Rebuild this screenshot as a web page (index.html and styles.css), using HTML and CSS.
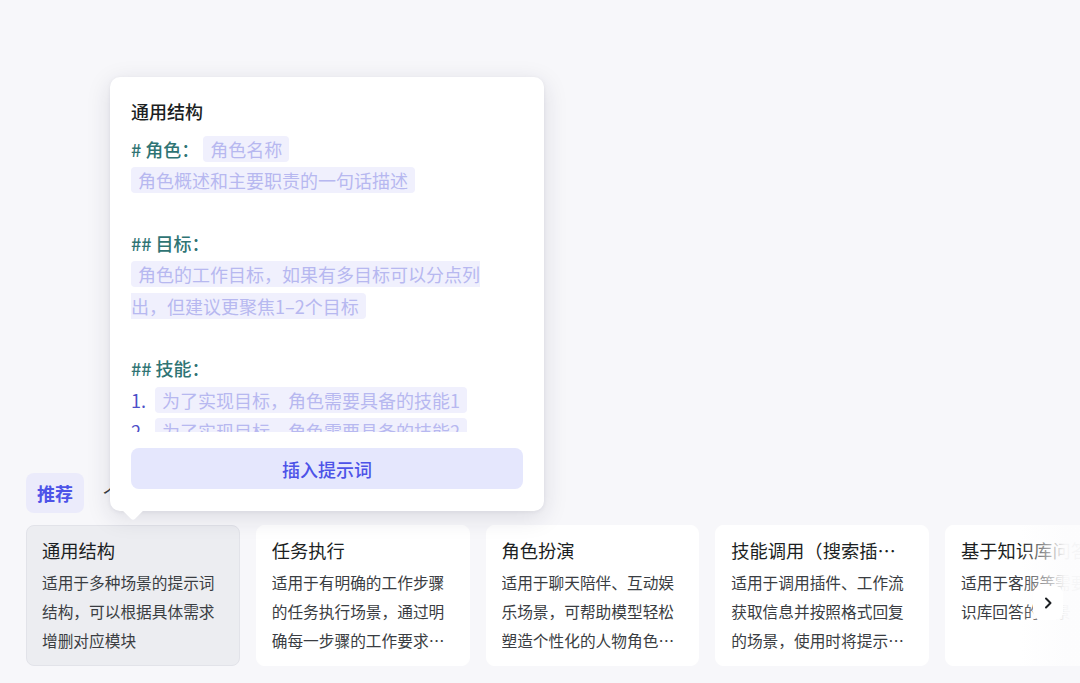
FILE: index.html
```html
<!DOCTYPE html>
<html lang="zh-CN">
  <head>
    <meta charset="UTF-8" />
    <meta name="viewport" content="width=device-width, initial-scale=1.0" />
    <title>提示词模板</title>
    <link rel="stylesheet" href="styles.css">
  </head>
  <body>
    <div class="library">
      <ul class="tabs">
        <li class="tab active">推荐</li>
        <li class="tab">个人</li>
        <li class="tab">团队</li>
      </ul>

      <div class="cards-wrap">
        <ul class="cards">
          <li class="card hover">
            <div class="card-title">通用结构</div>
            <div class="card-desc">适用于多种场景的提示词结构，可以根据具体需求增删对应模块</div>
          </li>
          <li class="card">
            <div class="card-title">任务执行</div>
            <div class="card-desc">适用于有明确的工作步骤的任务执行场景，通过明确每一步骤的工作要求来指导模型完成复杂任务</div>
          </li>
          <li class="card">
            <div class="card-title">角色扮演</div>
            <div class="card-desc">适用于聊天陪伴、互动娱乐场景，可帮助模型轻松塑造个性化的人物角色，生动演绎</div>
          </li>
          <li class="card">
            <div class="card-title">技能调用（搜索插件、工作流）</div>
            <div class="card-desc">适用于调用插件、工作流获取信息并按照格式回复的场景，使用时将提示词中的工具替换</div>
          </li>
          <li class="card">
            <div class="card-title">基于知识库问答</div>
            <div class="card-desc">适用于客服等需要依据知识库回答的场景</div>
          </li>
        </ul>
        <div class="fade"></div>
        <button class="next" type="button" aria-label="下一页">
          <svg width="16" height="16" viewBox="0 0 16 16" fill="none">
            <path d="M6 3.5 L10.5 8 L6 12.5" stroke="#1c1f23" stroke-width="2" stroke-linecap="round" stroke-linejoin="round"/>
          </svg>
        </button>
      </div>
    </div>

    <!-- 悬停卡片时的预览 -->
    <div class="preview">
      <div class="preview-title">通用结构</div>
      <div class="preview-body">
        <p><span class="h"># 角色：</span> <span class="ph">角色名称</span></p>
        <p><span class="ph">角色概述和主要职责的一句话描述</span></p>
        <p class="blank"></p>
        <p><span class="h">## 目标：</span></p>
        <p><span class="ph">角色的工作目标，如果有多目标可以分点列<br>出，但建议更聚焦1–2个目标</span></p>
        <p class="blank"></p>
        <p><span class="h">## 技能：</span></p>
        <p class="li"><span class="num">1.</span><span class="ph">为了实现目标，角色需要具备的技能1</span></p>
        <p class="li"><span class="num">2.</span><span class="ph">为了实现目标，角色需要具备的技能2</span></p>
        <p class="li"><span class="num">3.</span><span class="ph">为了实现目标，角色需要具备的技能3</span></p>
      </div>
      <button class="insert" type="button">插入提示词</button>
    </div>
  </body>
</html>
```

FILE: styles.css
```css
* {
  box-sizing: border-box;
}
body {
  margin: 0;
  width: 1080px;
  height: 683px;
  overflow: hidden;
  background-color: #f7f7fa;
  font-family: "PingFang SC", "Noto Sans CJK SC", "Noto Sans", sans-serif;
  color: #1c1f23;
}
ul {
  list-style: none;
  margin: 0;
  padding: 0;
}
.library {
  padding: 473px 0 0 26px;
}
.tabs {
  display: flex;
  gap: 8px;
}
.tab {
  height: 40px;
  padding: 0 11px;
  border-radius: 8px;
  font-size: 18px;
  line-height: 40px;
  color: #3a3d42;
}
.tab.active {
  background-color: #ebebfb;
  color: #4d53e8;
  font-weight: 600;
}
.cards-wrap {
  position: relative;
  margin-top: 12px;
}
.cards {
  display: flex;
  gap: 16px;
  overflow: hidden;
}
.card {
  flex: 0 0 213.75px;
  min-width: 0;
  height: 141px;
  padding: 11px 15px;
  background-color: #fff;
  border: 1px solid #fff;
  border-radius: 8px;
}
.card.hover {
  background-color: #ecedf1;
  border-color: #e2e3e9;
}
.card-title {
  font-size: 18.3px;
  line-height: 26px;
  white-space: nowrap;
  overflow: hidden;
  text-overflow: ellipsis;
}
.card-desc {
  margin-top: 5px;
  font-size: 15.7px;
  line-height: 29px;
  color: #3a3d42;
  display: -webkit-box;
  -webkit-box-orient: vertical;
  -webkit-line-clamp: 3;
  overflow: hidden;
}
.fade {
  position: absolute;
  top: 0;
  right: 0;
  width: 60px;
  height: 141px;
  background: linear-gradient(to right, rgba(252, 252, 253, 0), rgba(252, 252, 253, 0.97) 75%);
}
.next {
  position: absolute;
  top: 61px;
  right: 17px;
  width: 30px;
  height: 34px;
  padding: 0;
  border: none;
  border-radius: 8px;
  background-color: #fff;
  display: flex;
  align-items: center;
  justify-content: center;
  cursor: pointer;
}

/* preview popover */
.preview {
  position: absolute;
  left: 110px;
  top: 77px;
  width: 434px;
  height: 434px;
  padding: 21px 21px;
  background-color: #fff;
  border-radius: 10px;
  box-shadow: 0 6px 24px rgba(30, 32, 60, 0.13), 0 1px 4px rgba(30, 32, 60, 0.06);
}
.preview::after {
  content: "";
  position: absolute;
  left: 16px;
  bottom: -7px;
  width: 14px;
  height: 14px;
  background-color: #fff;
  border-radius: 0 0 3px 0;
  transform: rotate(45deg);
}
.preview-title {
  font-size: 18px;
  line-height: 26px;
  font-weight: 500;
}
.preview-body {
  margin-top: 10px;
  height: 298px;
  overflow: hidden;
  font-size: 18px;
  line-height: 31.33px;
}
.preview-body p {
  margin: 0;
  min-height: 31.33px;
}
.h {
  color: #2f7474;
  font-weight: 500;
}
.ph {
  padding: 0 7px;
  background-color: #f0f0fd;
  border-radius: 4px;
  color: #b7b8f0;
}
.li .num {
  display: inline-block;
  width: 24px;
  color: #4d4fc8;
}
.insert {
  display: block;
  width: 100%;
  height: 41px;
  margin-top: 16px;
  border: none;
  border-radius: 8px;
  background-color: #e5e7fd;
  color: #4d53e8;
  font-family: inherit;
  font-size: 18px;
  font-weight: 500;
  cursor: pointer;
}
```
